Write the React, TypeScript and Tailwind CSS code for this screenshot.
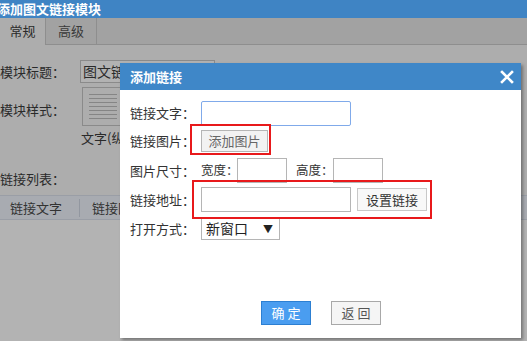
import React from "react";

const font = "font-['Microsoft_YaHei','Noto_Sans_CJK_SC',sans-serif]";

export default function App() {
  return (
    <div className={`relative w-[527px] h-[341px] overflow-hidden bg-[#adadad] text-[13px] text-[#2a2a2a] whitespace-nowrap ${font}`}>
      {/* Background page (dimmed) */}
      <div className="h-[18px] bg-[#3f84c4] text-white font-bold leading-[18px] -ml-[3px] text-[13px]">
        添加图文链接模块
      </div>
      <div className="flex h-[27px] bg-[#a2a2a2] border-b border-[#8e8e8e]">
        <div className="w-[46px] h-[27px] bg-[#adadad] border-r border-[#8e8e8e] text-center leading-[26px]">常规</div>
        <div className="w-[51px] border-r border-[#8e8e8e] text-center leading-[26px] text-[#3a3a3a]">高级</div>
      </div>

      <div className="flex items-center mt-[15px] h-[23px]">
        <span className="w-[80px] shrink-0">模块标题：</span>
        <div className="w-[135px] h-[23px] border border-[#8a8a8a] bg-[#b2b2b2] pl-[2px] leading-[21px] text-[14px]">图文链接</div>
      </div>

      <div className="flex mt-[4px]">
        <span className="w-[82px] shrink-0 mt-[13px]">模块样式：</span>
        <div className="w-[40px] h-[39px] border border-[#8a8a8a] flex flex-col gap-[3px] pt-[6px] pl-[6px]">
          <div className="w-[28px] h-px bg-[#858585]" />
          <div className="w-[28px] h-px bg-[#858585]" />
          <div className="w-[28px] h-px bg-[#858585]" />
          <div className="w-[28px] h-px bg-[#858585]" />
          <div className="w-[28px] h-px bg-[#858585]" />
          <div className="w-[28px] h-px bg-[#858585]" />
          <div className="w-[28px] h-px bg-[#858585]" />
        </div>
      </div>
      <div className="pl-[81px] mt-[2px] leading-[20px]">文字(纵向)</div>

      <div className="mt-[21px] leading-[20px]">链接列表：</div>

      <div className="flex items-center h-[25px] mt-[6px] bg-[#a8abb1] border-y border-[#9a9ea6] text-[#333]">
        <span className="w-[80px] shrink-0 pl-[10px] border-r border-[#9297a0] leading-[18px]">链接文字</span>
        <span className="pl-[12px]">链接图片</span>
      </div>
      <div className="h-[121px] bg-[#b3b3b3]" />

      {/* Modal */}
      <div className="absolute left-[120px] top-[63px] w-[401px] h-[275px] bg-white shadow-[2px_2px_3px_rgba(0,0,0,0.35)] text-[#333]">
        <div className="flex items-center justify-between h-[27px] bg-[#3f87c8] text-white font-bold pl-[10px] pr-[7px]">
          <span>添加链接</span>
          <svg width="14" height="14" viewBox="0 0 14 14">
            <path d="M2 2 L12 12 M12 2 L2 12" stroke="white" strokeWidth="2.6" strokeLinecap="square" />
          </svg>
        </div>

        <div className="pl-[10px] pt-[10px] flex flex-col">
          <div className="flex items-center h-[26px]">
            <span className="w-[71px] shrink-0">链接文字：</span>
            <div className="w-[150px] h-[25px] border border-[#80aaea] rounded-[2px]" />
          </div>

          <div className="flex items-center h-[24px] mt-[3px] relative">
            <span className="w-[71px] shrink-0">链接图片：</span>
            <div className="w-[67px] h-[22px] border border-[#b5b5b5] bg-[#f2f2f2] text-[#666] text-center leading-[20px]">添加图片</div>
            <div className="absolute left-[60px] top-[-5px] w-[81px] h-[31px] border-2 border-[#e8191b]" />
          </div>

          <div className="flex items-center h-[25px] mt-[5px]">
            <span className="w-[71px] shrink-0">图片尺寸：</span>
            <span className="w-[36px] shrink-0 text-[12.5px]">宽度：</span>
            <div className="w-[50px] h-[25px] shrink-0 border border-[#b5b5b5]" />
            <span className="ml-[9px] w-[37px] shrink-0 text-[12.5px]">高度：</span>
            <div className="w-[50px] h-[25px] shrink-0 border border-[#b5b5b5]" />
          </div>

          <div className="flex items-center h-[25px] mt-[4px] relative">
            <span className="w-[71px] shrink-0">链接地址：</span>
            <div className="w-[150px] h-[25px] border border-[#b5b5b5]" />
            <div className="ml-[6px] w-[70px] h-[23px] border border-[#c8c8c8] bg-[#f8f8f8] text-center leading-[21px]">设置链接</div>
            <div className="absolute left-[62px] top-[-7px] w-[240px] h-[39px] border-2 border-[#e8191b]" />
          </div>

          <div className="flex items-center h-[23px] mt-[5px]">
            <span className="w-[71px] shrink-0">打开方式：</span>
            <div className="w-[79px] h-[23px] border border-[#b5b5b5] flex items-center justify-between pl-[4px] pr-[6px]">
              <span className="text-[14px] text-[#222]">新窗口</span>
              <span className="text-[10px] text-[#222]">▼</span>
            </div>
          </div>
        </div>

        <div className="absolute left-[141px] top-[238px] flex gap-[20px]">
          <div className="w-[50px] h-[24px] bg-[#4a9df0] border border-[#2c7fd2] text-white text-center leading-[22px] tracking-[3px] pl-[3px]">确定</div>
          <div className="w-[50px] h-[24px] bg-[#f5f5f5] border border-[#a8a8a8] text-[#555] text-center leading-[22px] tracking-[3px] pl-[3px]">返回</div>
        </div>
      </div>
    </div>
  );
}
